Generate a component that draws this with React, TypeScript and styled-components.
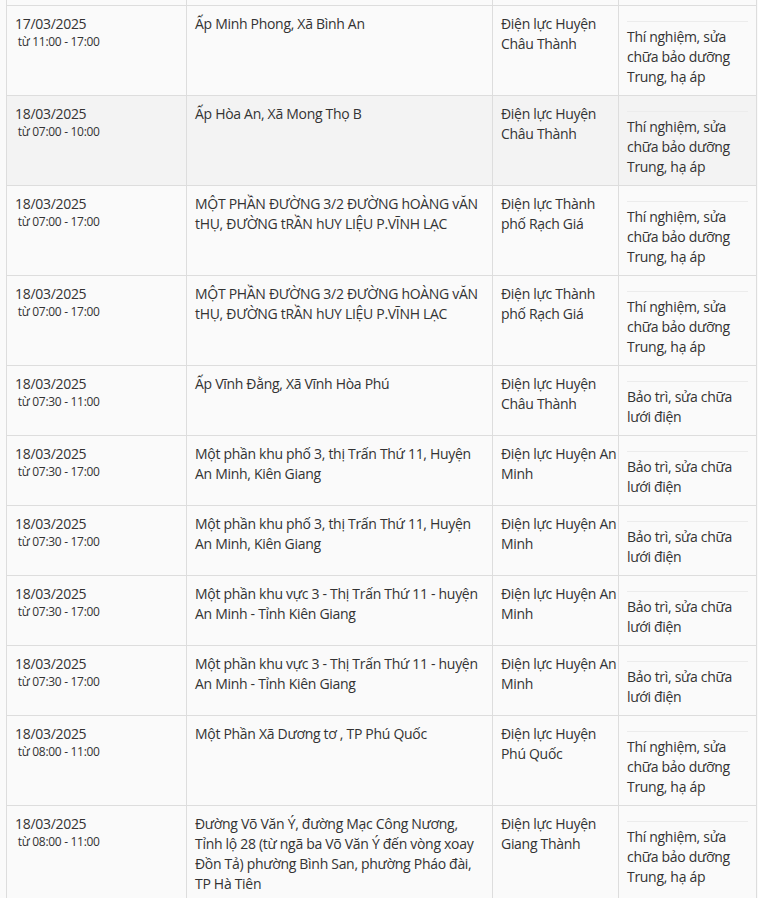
import React from 'react'
import styled, { createGlobalStyle } from 'styled-components'

type Outage = {
  date: string
  time: string
  area: string
  unit: string
  reason: string
}

// line breaks follow the wrapping of the original page
const TEST = 'Thí nghiệm, sửa\nchữa bảo dưỡng\nTrung, hạ áp'
const REPAIR = 'Bảo trì, sửa chữa\nlưới điện'
const RACH_GIA_AREA = 'MỘT PHẦN ĐƯỜNG 3/2 ĐƯỜNG hOÀNG vĂN\ntHỤ, ĐƯỜNG tRẦN hUY LIỆU P.VĨNH LẠC'
const KP3 = 'Một phần khu phố 3, thị Trấn Thứ 11, Huyện\nAn Minh, Kiên Giang'
const KV3 = 'Một phần khu vực 3 - Thị Trấn Thứ 11 - huyện\nAn Minh - Tỉnh Kiên Giang'
const CHAU_THANH = 'Điện lực Huyện\nChâu Thành'
const AN_MINH = 'Điện lực Huyện An\nMinh'
const RACH_GIA = 'Điện lực Thành\nphố Rạch Giá'

const rows: Outage[] = [
  { date: '17/03/2025', time: '11:00 - 17:00', area: 'Ấp Minh Phong, Xã Bình An', unit: CHAU_THANH, reason: TEST },
  { date: '18/03/2025', time: '07:00 - 10:00', area: 'Ấp Hòa An, Xã Mong Thọ B', unit: CHAU_THANH, reason: TEST },
  { date: '18/03/2025', time: '07:00 - 17:00', area: RACH_GIA_AREA, unit: RACH_GIA, reason: TEST },
  { date: '18/03/2025', time: '07:00 - 17:00', area: RACH_GIA_AREA, unit: RACH_GIA, reason: TEST },
  { date: '18/03/2025', time: '07:30 - 11:00', area: 'Ấp Vĩnh Đằng, Xã Vĩnh Hòa Phú', unit: CHAU_THANH, reason: REPAIR },
  { date: '18/03/2025', time: '07:30 - 17:00', area: KP3, unit: AN_MINH, reason: REPAIR },
  { date: '18/03/2025', time: '07:30 - 17:00', area: KP3, unit: AN_MINH, reason: REPAIR },
  { date: '18/03/2025', time: '07:30 - 17:00', area: KV3, unit: AN_MINH, reason: REPAIR },
  { date: '18/03/2025', time: '07:30 - 17:00', area: KV3, unit: AN_MINH, reason: REPAIR },
  { date: '18/03/2025', time: '08:00 - 11:00', area: 'Một Phần Xã Dương tơ , TP Phú Quốc', unit: 'Điện lực Huyện\nPhú Quốc', reason: TEST },
  {
    date: '18/03/2025',
    time: '08:00 - 11:00',
    area: 'Đường Võ Văn Ý, đường Mạc Công Nương,\nTỉnh lộ 28 (từ ngã ba Võ Văn Ý đến vòng xoay\nĐồn Tả) phường Bình San, phường Pháo đài,\nTP Hà Tiên',
    unit: 'Điện lực Huyện\nGiang Thành',
    reason: TEST,
  },
]

// the row under the mouse in the screenshot
const HOVER_ROW = 1

function App() {
  return (
    <>
      <GlobalStyle />
      <Page>
        <Table>
          <colgroup>
            <col style={{ width: 180 }} />
            <col style={{ width: 306 }} />
            <col style={{ width: 126 }} />
            <col style={{ width: 138 }} />
          </colgroup>
          <tbody>
            <TailRow>
              <td />
              <td />
              <td />
              <td />
            </TailRow>
            {rows.map((r, i) => (
              <Row key={i} $hover={i === HOVER_ROW}>
                <Cell>
                  <DateText>{r.date}</DateText>
                  <TimeText> từ {r.time}</TimeText>
                </Cell>
                <Cell>{r.area}</Cell>
                <Cell>{r.unit}</Cell>
                <Cell>
                  <Rule />
                  {r.reason}
                </Cell>
              </Row>
            ))}
          </tbody>
        </Table>
      </Page>
    </>
  )
}

const GlobalStyle = createGlobalStyle`
  html, body {
    margin: 0;
    padding: 0;
    background: #fafafa;
  }
`

const Page = styled.div`
  height: 898px;
  overflow: hidden;
  padding-left: 6px;
  font-family: 'Open Sans', 'Noto Sans', sans-serif;
  letter-spacing: -0.3px;
  color: #333;
`

const Table = styled.table`
  border-collapse: collapse;
  table-layout: fixed;
  width: 750px;
  background: #fafafa;
`

const TailRow = styled.tr`
  height: 5px;
  td {
    border: 1px solid #dddddd;
    border-top: none;
    padding: 0;
  }
`

const Row = styled.tr<{ $hover?: boolean }>`
  background: ${(p) => (p.$hover ? '#f3f3f3' : '#fafafa')};
`

const Cell = styled.td`
  border: 1px solid #dddddd;
  padding: 8px;
  vertical-align: top;
  font-size: 14px;
  line-height: 20px;
  color: #333;
  white-space: pre;
`

const DateText = styled.div`
  font-size: 14px;
  line-height: 20px;
`

const TimeText = styled.div`
  font-size: 12px;
  line-height: 16px;
`

const Rule = styled.div`
  border-top: 1px solid #ececec;
  margin: 7px 0 5px;
`

export default App
